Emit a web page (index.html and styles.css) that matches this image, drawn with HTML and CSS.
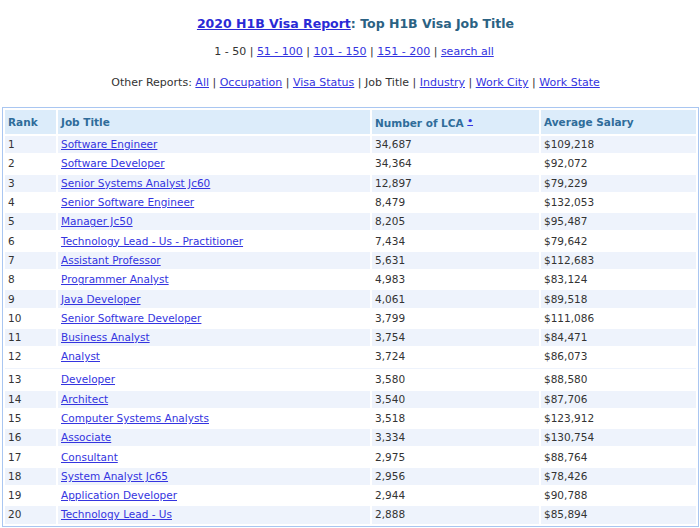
FILE: index.html
```html
<!DOCTYPE html>
<html>
<head>
<meta charset="utf-8">
<title>2020 H1B Visa Report: Top H1B Visa Job Title</title>
<link rel="stylesheet" href="styles.css">
</head>
<body>
<div class="page">
  <h1 class="title"><a href="#">2020 H1B Visa Report</a>: Top H1B Visa Job Title</h1>
  <p class="nav">1 - 50 | <a href="#">51 - 100</a> | <a href="#">101 - 150</a> | <a href="#">151 - 200</a> | <a href="#">search all</a></p>
  <p class="nav reports">Other Reports: <a href="#">All</a> | <a href="#">Occupation</a> | <a href="#">Visa Status</a> | Job Title | <a href="#">Industry</a> | <a href="#">Work City</a> | <a href="#">Work State</a></p>
  <table class="report">
    <thead>
      <tr><th class="c-rank">Rank</th><th class="c-title">Job Title</th><th class="c-lca">Number of LCA <a class="sort" href="#">&bull;</a></th><th class="c-sal">Average Salary</th></tr>
    </thead>
    <tbody>
      <tr class="odd"><td>1</td><td><a href="#">Software Engineer</a></td><td>34,687</td><td>$109,218</td></tr>
      <tr><td>2</td><td><a href="#">Software Developer</a></td><td>34,364</td><td>$92,072</td></tr>
      <tr class="odd"><td>3</td><td><a href="#">Senior Systems Analyst Jc60</a></td><td>12,897</td><td>$79,229</td></tr>
      <tr><td>4</td><td><a href="#">Senior Software Engineer</a></td><td>8,479</td><td>$132,053</td></tr>
      <tr class="odd"><td>5</td><td><a href="#">Manager Jc50</a></td><td>8,205</td><td>$95,487</td></tr>
      <tr><td>6</td><td><a href="#">Technology Lead - Us - Practitioner</a></td><td>7,434</td><td>$79,642</td></tr>
      <tr class="odd"><td>7</td><td><a href="#">Assistant Professor</a></td><td>5,631</td><td>$112,683</td></tr>
      <tr><td>8</td><td><a href="#">Programmer Analyst</a></td><td>4,983</td><td>$83,124</td></tr>
      <tr class="odd"><td>9</td><td><a href="#">Java Developer</a></td><td>4,061</td><td>$89,518</td></tr>
      <tr><td>10</td><td><a href="#">Senior Software Developer</a></td><td>3,799</td><td>$111,086</td></tr>
      <tr class="odd"><td>11</td><td><a href="#">Business Analyst</a></td><td>3,754</td><td>$84,471</td></tr>
      <tr><td>12</td><td><a href="#">Analyst</a></td><td>3,724</td><td>$86,073</td></tr>
      <tr class="odd sep"><td colspan="4"></td></tr>
      <tr><td>13</td><td><a href="#">Developer</a></td><td>3,580</td><td>$88,580</td></tr>
      <tr class="odd"><td>14</td><td><a href="#">Architect</a></td><td>3,540</td><td>$87,706</td></tr>
      <tr><td>15</td><td><a href="#">Computer Systems Analysts</a></td><td>3,518</td><td>$123,912</td></tr>
      <tr class="odd"><td>16</td><td><a href="#">Associate</a></td><td>3,334</td><td>$130,754</td></tr>
      <tr><td>17</td><td><a href="#">Consultant</a></td><td>2,975</td><td>$88,764</td></tr>
      <tr class="odd"><td>18</td><td><a href="#">System Analyst Jc65</a></td><td>2,956</td><td>$78,426</td></tr>
      <tr><td>19</td><td><a href="#">Application Developer</a></td><td>2,944</td><td>$90,788</td></tr>
      <tr class="odd"><td>20</td><td><a href="#">Technology Lead - Us</a></td><td>2,888</td><td>$85,894</td></tr>
    </tbody>
  </table>
</div>
</body>
</html>
```
FILE: styles.css
```css
html, body {
  margin: 0;
  padding: 0;
  background: #ffffff;
}
body {
  font-family: "DejaVu Sans", Verdana, sans-serif;
  font-size: 10.5px;
  color: #333333;
}
.page {
  padding: 0 1px 0 2px;
}
a {
  color: #3434e0;
  text-decoration: underline;
}
.title {
  margin: 0;
  padding: 16px 0 0 10px;
  height: 24px;
  text-align: center;
  font-size: 12.5px;
  font-weight: bold;
  color: #2b6283;
  line-height: 16px;
}
.title a {
  color: #2a2ad6;
}
.nav {
  margin: 5px 0 0 0;
  padding-left: 7px;
  text-align: center;
  font-size: 11px;
  line-height: 14px;
  height: 31px;
}
.reports {
  margin-top: 0;
  padding-left: 10px;
  height: 31px;
}
.report {
  width: 697px;
  border: 1px solid #a9c6f1;
  border-spacing: 2px;
  margin-top: 0;
}
.report th {
  background: #dcecfa;
  color: #2f6c9a;
  font-weight: bold;
  text-align: left;
  height: 24px;
  padding: 0 3px;
  font-size: 10.5px;
}
.report td {
  height: 17.3px;
  padding: 0 3px;
  line-height: 13px;
}
.report tr.odd td {
  background: #eef3fc;
}
.report tr.sep td {
  height: 1.7px;
  padding: 0;
  line-height: 0;
}
.c-rank { width: 45px; }
.c-title { width: 306px; }
.c-lca { width: 161px; }
.sort {
  font-size: 9px;
  vertical-align: 3px;
  color: #3434e0;
}
```
